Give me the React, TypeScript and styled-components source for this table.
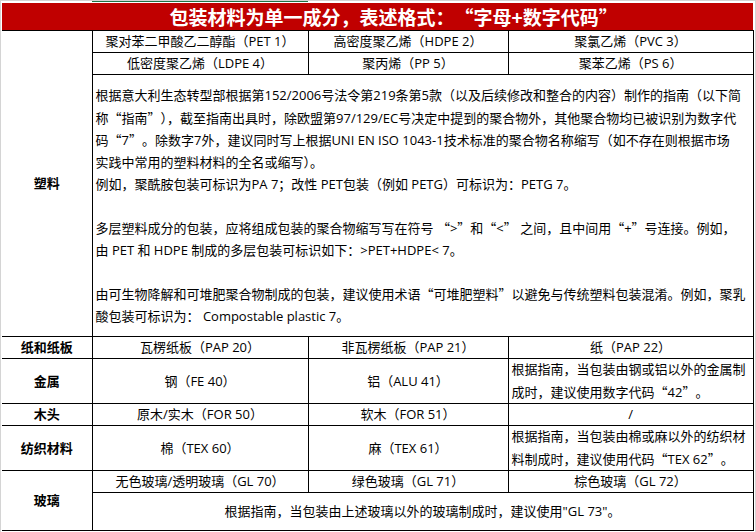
import React from "react";
import styled, { createGlobalStyle } from "styled-components";

const plasticLines = [
  "根据意大利生态转型部根据第152/2006号法令第219条第5款（以及后续修改和整合的内容）制作的指南（以下简",
  "称“指南”），截至指南出具时，除欧盟第97/129/EC号决定中提到的聚合物外，其他聚合物均已被识别为数字代",
  "码“7”。除数字7外，建议同时写上根据UNI EN ISO 1043-1技术标准的聚合物名称缩写（如不存在则根据市场",
  "实践中常用的塑料材料的全名或缩写）。",
  "例如，聚酰胺包装可标识为PA 7；改性 PET包装（例如 PETG）可标识为：PETG 7。",
  "",
  "多层塑料成分的包装，应将组成包装的聚合物缩写写在符号 “>”和“<” 之间，且中间用“+”号连接。例如，",
  "由 PET 和 HDPE 制成的多层包装可标识如下：>PET+HDPE< 7。",
  "",
  "由可生物降解和可堆肥聚合物制成的包装，建议使用术语“可堆肥塑料”以避免与传统塑料包装混淆。例如，聚乳",
  "酸包装可标识为： Compostable plastic 7。",
];

// chinese curly quotes take a full em box, the way excel draws them with YaHei
const withQuotes = (text: string) =>
  text.split(/([“”])/).map((part, i) =>
    part === "“" || part === "”" ? (
      <Quote key={i} $open={part === "“"}>
        {part}
      </Quote>
    ) : (
      part
    )
  );

const App = () => {
  return (
    <>
      <GlobalStyle />
      <Sheet>
        <SelectedColumnMark />
        <Grid>
          <colgroup>
            <col style={{ width: 90 }} />
            <col style={{ width: 216 }} />
            <col style={{ width: 200 }} />
            <col style={{ width: 245 }} />
          </colgroup>
          <tbody>
            <Row $h={27}>
              <TitleCell colSpan={4}>
                {withQuotes("包装材料为单一成分，表述格式：“字母+数字代码”")}
              </TitleCell>
            </Row>

            <Row $h={22}>
              <CategoryCell rowSpan={3}>塑料</CategoryCell>
              <Cell>聚对苯二甲酸乙二醇酯（PET 1）</Cell>
              <Cell>高密度聚乙烯（HDPE 2）</Cell>
              <Cell>聚氯乙烯（PVC 3）</Cell>
            </Row>
            <Row $h={22}>
              <Cell>低密度聚乙烯（LDPE 4）</Cell>
              <Cell>聚丙烯（PP 5）</Cell>
              <Cell>聚苯乙烯（PS 6）</Cell>
            </Row>
            <Row $h={262}>
              <TextBlockCell colSpan={3}>
                {plasticLines.map((line, i) => (
                  <Line key={i}>{line ? withQuotes(line) : "\u00a0"}</Line>
                ))}
              </TextBlockCell>
            </Row>

            <Row $h={22}>
              <CategoryCell>纸和纸板</CategoryCell>
              <Cell>瓦楞纸板（PAP 20）</Cell>
              <Cell>非瓦楞纸板（PAP 21）</Cell>
              <Cell>纸（PAP 22）</Cell>
            </Row>

            <Row $h={44}>
              <CategoryCell>金属</CategoryCell>
              <Cell>钢（FE 40）</Cell>
              <Cell>铝（ALU 41）</Cell>
              <NoteCell>
                <NoteLine>根据指南，当包装由钢或铝以外的金属制</NoteLine>
                <NoteLine>成时，建议使用数字代码{withQuotes("“42”")}。</NoteLine>
              </NoteCell>
            </Row>

            <Row $h={22}>
              <CategoryCell>木头</CategoryCell>
              <Cell>原木/实木（FOR 50）</Cell>
              <Cell>软木（FOR 51）</Cell>
              <Cell>/</Cell>
            </Row>

            <Row $h={44}>
              <CategoryCell>纺织材料</CategoryCell>
              <Cell>棉（TEX 60）</Cell>
              <Cell>麻（TEX 61）</Cell>
              <NoteCell>
                <NoteLine>根据指南，当包装由棉或麻以外的纺织材</NoteLine>
                <NoteLine>料制成时，建议使用代码{withQuotes("“TEX 62”")}。</NoteLine>
              </NoteCell>
            </Row>

            <Row $h={22}>
              <CategoryCell rowSpan={2}>玻璃</CategoryCell>
              <Cell>无色玻璃/透明玻璃（GL 70）</Cell>
              <Cell>绿色玻璃（GL 71）</Cell>
              <Cell>棕色玻璃（GL 72）</Cell>
            </Row>
            <Row $h={38}>
              <Cell colSpan={3}>根据指南，当包装由上述玻璃以外的玻璃制成时，建议使用"GL 73"。</Cell>
            </Row>
          </tbody>
        </Grid>
      </Sheet>
    </>
  );
};

export default App;

const GlobalStyle = createGlobalStyle`
  html, body {
    margin: 0;
    padding: 0;
    background: #ffffff;
  }
  body {
    font-family: "Open Sans", "Noto Sans CJK SC", "Microsoft YaHei", sans-serif;
  }
`;

const Sheet = styled.div`
  /* excel gridlines around the printed range */
  position: relative;
  width: 756px;
  height: 532px;
  box-sizing: border-box;
  border-top: 1px solid #d4d4d4;
  border-left: 1px solid #d4d4d4;
  border-right: 1px solid #d4d4d4;
  padding: 2px 0 0 1px;
  overflow: hidden;
`;

const SelectedColumnMark = styled.div`
  position: absolute;
  top: -1px;
  left: 91px;
  width: 216px;
  height: 2px;
  background: #217346;
`;

const Grid = styled.table`
  border-collapse: collapse;
  table-layout: fixed;
  width: 751px;
  font-size: 13px;
  color: #000000;
`;

const Row = styled.tr<{ $h: number }>`
  height: ${(p) => p.$h}px;
`;

const Quote = styled.span<{ $open: boolean }>`
  display: inline-block;
  width: 1em;
  text-align: ${(p) => (p.$open ? "right" : "left")};
  font-family: "Noto Sans CJK SC", sans-serif;
`;

const TitleCell = styled.td`
  padding: 0 0 0 32px;
  background: #c00000;
  color: #ffffff;
  font-family: "Noto Sans CJK SC", "Microsoft YaHei", sans-serif;
  font-size: 19px;
  font-weight: 700;
  text-align: center;
  line-height: 27px;
  white-space: nowrap;
  border-bottom: 1px solid #000000;
`;

const Cell = styled.td`
  padding: 0 3px;
  border: 1px solid #000000;
  text-align: center;
  vertical-align: middle;
  line-height: 21px;
  white-space: nowrap;
`;

const CategoryCell = styled(Cell)`
  border-left: none;
  font-weight: 700;
`;

const TextBlockCell = styled(Cell)`
  text-align: left;
  vertical-align: top;
  padding: 10px 3px 0;
`;

const NoteCell = styled(Cell)`
  text-align: left;
`;

const Line = styled.div`
  line-height: 21.67px;
  white-space: nowrap;
`;

const NoteLine = styled(Line)`
  line-height: 21.5px;
`;
